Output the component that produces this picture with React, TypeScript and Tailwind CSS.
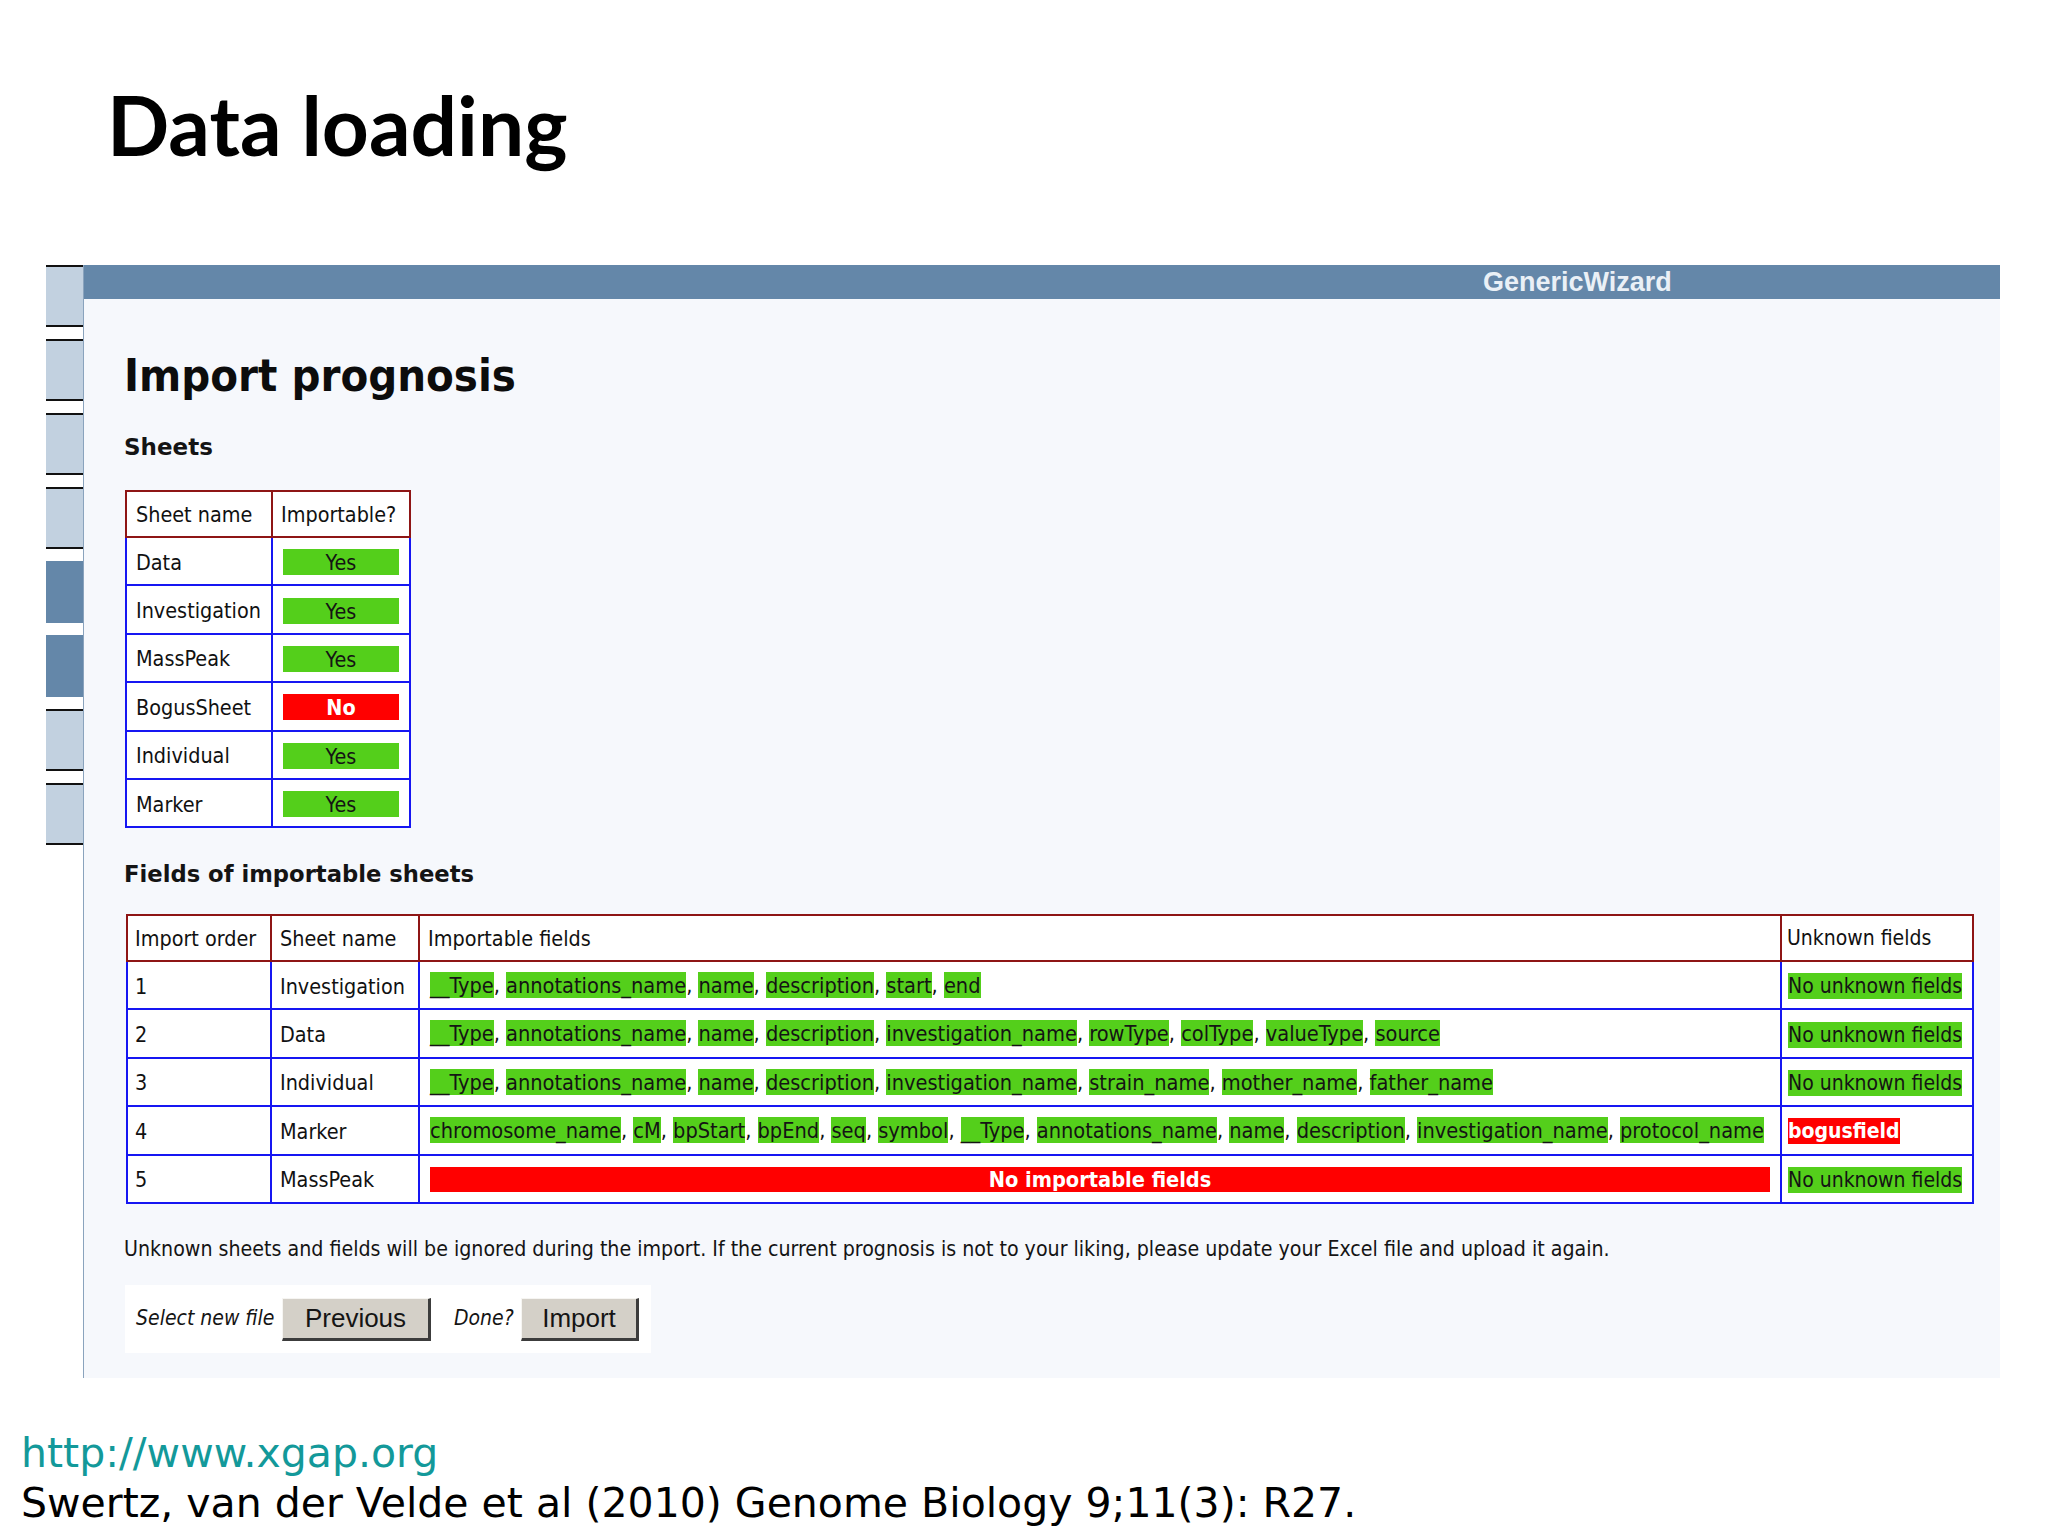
const tahoma = "font-['DejaVu_Sans_Condensed','DejaVu_Sans',sans-serif] [font-stretch:condensed]";
const verdana = "font-['DejaVu_Sans',sans-serif]";

const sheets = [
  { name: 'Data', ok: true },
  { name: 'Investigation', ok: true },
  { name: 'MassPeak', ok: true },
  { name: 'BogusSheet', ok: false },
  { name: 'Individual', ok: true },
  { name: 'Marker', ok: true },
];

const fieldRows = [
  {
    order: '1',
    sheet: 'Investigation',
    fields: ['__Type', 'annotations_name', 'name', 'description', 'start', 'end'],
    unknown: null as string | null,
  },
  {
    order: '2',
    sheet: 'Data',
    fields: ['__Type', 'annotations_name', 'name', 'description', 'investigation_name', 'rowType', 'colType', 'valueType', 'source'],
    unknown: null,
  },
  {
    order: '3',
    sheet: 'Individual',
    fields: ['__Type', 'annotations_name', 'name', 'description', 'investigation_name', 'strain_name', 'mother_name', 'father_name'],
    unknown: null,
  },
  {
    order: '4',
    sheet: 'Marker',
    fields: ['chromosome_name', 'cM', 'bpStart', 'bpEnd', 'seq', 'symbol', '__Type', 'annotations_name', 'name', 'description', 'investigation_name', 'protocol_name'],
    unknown: 'bogusfield',
  },
  {
    order: '5',
    sheet: 'MassPeak',
    fields: [] as string[],
    unknown: null,
  },
];

const tabs = [false, false, false, false, true, true, false, false];

function GreenTag({ children }: { children: React.ReactNode }) {
  return <span className="inline-block h-[26px] leading-[27px] bg-[#54cf1b] text-[#141414]">{children}</span>;
}

function RedTag({ children }: { children: React.ReactNode }) {
  return <span className="inline-block h-[26px] leading-[27px] bg-[#ff0000] text-white font-bold">{children}</span>;
}

function SheetsTable() {
  return (
    <div className={`ml-px w-[286px] text-[21.4px] text-[#111] ${tahoma}`}>
      <div className="flex h-[48px] border-2 border-[#8e1515] bg-white">
        <div className="flex w-[146px] items-center border-r-2 border-[#8e1515] pl-[9px] pt-[2px]">Sheet name</div>
        <div className="flex flex-1 items-center pl-[8px] pt-[2px]">Importable?</div>
      </div>
      {sheets.map((s) => (
        <div key={s.name} className="flex h-[48.4px] border-x-2 border-b-2 border-[#1616f2] bg-white">
          <div className="flex w-[146px] items-center border-r-2 border-[#1616f2] pl-[9px] pt-[3px]">{s.name}</div>
          <div className="flex flex-1 items-center px-[10px] pt-[2px]">
            {s.ok ? (
              <div className="h-[26px] w-full bg-[#54cf1b] text-center leading-[27px] text-[#141414]">Yes</div>
            ) : (
              <div className="h-[26px] w-full bg-[#ff0000] text-center font-bold leading-[27px] text-white">No</div>
            )}
          </div>
        </div>
      ))}
    </div>
  );
}

function FieldsTable() {
  return (
    <div className={`ml-[2px] w-[1848px] text-[21.4px] text-[#111] ${tahoma}`}>
      <div className="flex h-[48px] border-2 border-[#8e1515] bg-white">
        <div className="flex w-[144px] items-center border-r-2 border-[#8e1515] pl-[7px] pt-[2px]">Import order</div>
        <div className="flex w-[148px] items-center border-r-2 border-[#8e1515] pl-[8px] pt-[2px]">Sheet name</div>
        <div className="flex w-[1362px] items-center border-r-2 border-[#8e1515] pl-[8px] pt-[2px]">Importable fields</div>
        <div className="flex flex-1 items-center pl-[5px] pt-[2px] text-[21px]">Unknown fields</div>
      </div>
      {fieldRows.map((r) => (
        <div key={r.order} className="flex h-[48.4px] border-x-2 border-b-2 border-[#1616f2] bg-white">
          <div className="flex w-[144px] items-center border-r-2 border-[#1616f2] pl-[7px] pt-[3px]">{r.order}</div>
          <div className="flex w-[148px] items-center border-r-2 border-[#1616f2] pl-[8px] pt-[3px]">{r.sheet}</div>
          <div className="flex w-[1362px] items-center whitespace-nowrap border-r-2 border-[#1616f2] px-[10px] pt-[2px] text-[21.6px]">
            {r.fields.length === 0 ? (
              <div className="h-[25px] w-full bg-[#ff0000] text-center font-bold leading-[26px] text-white">No importable fields</div>
            ) : (
              r.fields.map((f, i) => (
                <span key={i}>
                  <GreenTag>{f}</GreenTag>
                  {i < r.fields.length - 1 && <span>,&nbsp;</span>}
                </span>
              ))
            )}
          </div>
          <div className="flex flex-1 items-center whitespace-nowrap pl-[6px] pt-[2px] text-[21px]">
            {r.unknown ? <RedTag>{r.unknown}</RedTag> : <GreenTag>No unknown fields</GreenTag>}
          </div>
        </div>
      ))}
    </div>
  );
}

function WizardButton({ label, w }: { label: string; w: string }) {
  return (
    <button
      className={`${w} h-[43px] border-t border-l border-t-[#f6f5f2] border-l-[#f6f5f2] border-b-[3px] border-r-[3px] border-b-[#3c3c3c] border-r-[#3c3c3c] bg-[#d4d0c8] font-['Liberation_Sans',Arial,sans-serif] text-[26px] leading-none text-[#151515]`}
    >
      {label}
    </button>
  );
}

export default function App() {
  return (
    <div className="h-[1536px] w-[2048px] overflow-hidden bg-white">
      {/* slide title */}
      <div className="h-[265px] pl-[107px] pt-[83px]">
        <h1 className="font-['Lato',sans-serif] text-[82px] font-bold leading-none text-black">Data loading</h1>
      </div>

      {/* screenshot of the wizard */}
      <div className="ml-[46px] flex w-[1954px]">
        <div className="flex w-[37px] flex-col gap-[12px]">
          {tabs.map((dark, i) =>
            dark ? (
              <div key={i} className="h-[62px] bg-[#6487a9]" />
            ) : (
              <div key={i} className="h-[62px] border-y-2 border-[#111] bg-[#c2d1e0]" />
            ),
          )}
        </div>

        <div className="flex-1 border-l border-[#8aa3bd]">
          <div className="flex h-[34px] items-center bg-[#6487a9] pl-[1399px] font-['Liberation_Sans',Arial,sans-serif] text-[27px] font-bold text-[#eaf0f6]">
            GenericWizard
          </div>

          <div className="h-[1079px] bg-[#f6f8fc] pl-[40px] pt-[54px]">
            <h2 className={`text-[45px] font-bold leading-none text-[#0c0c0c] ${tahoma}`}>Import prognosis</h2>

            <h3 className={`mt-[38px] text-[23px] font-bold leading-none text-[#141414] ${verdana}`}>Sheets</h3>
            <div className="mt-[31px]">
              <SheetsTable />
            </div>

            <h3 className={`mt-[35px] text-[22.7px] font-bold leading-none text-[#141414] ${verdana}`}>Fields of importable sheets</h3>
            <div className="mt-[28px]">
              <FieldsTable />
            </div>

            <p className={`mt-[34px] text-[21.2px] leading-none text-[#141414] ${tahoma}`}>
              Unknown sheets and fields will be ignored during the import. If the current prognosis is not to your liking, please update your Excel file and upload it again.
            </p>

            <div className={`ml-px mt-[26px] inline-flex h-[68px] items-center bg-white pl-[11px] pr-[12px] text-[21px] text-[#141414] ${tahoma}`}>
              <span className="w-[140px] italic">Select new file</span>
              <span className="ml-[6px]">
                <WizardButton label="Previous" w="w-[149px]" />
              </span>
              <span className="ml-[23px] w-[63px] italic">Done?</span>
              <span className="ml-[4px]">
                <WizardButton label="Import" w="w-[118px]" />
              </span>
            </div>
          </div>
        </div>
      </div>

      {/* slide footer */}
      <div className={`mt-[50px] pl-[21px] text-[41px] leading-[50px] ${verdana}`}>
        <div className="text-[#13999a]">http://www.xgap.org</div>
        <div className="text-black">Swertz, van der Velde et al (2010) Genome Biology 9;11(3): R27.</div>
      </div>
    </div>
  );
}
